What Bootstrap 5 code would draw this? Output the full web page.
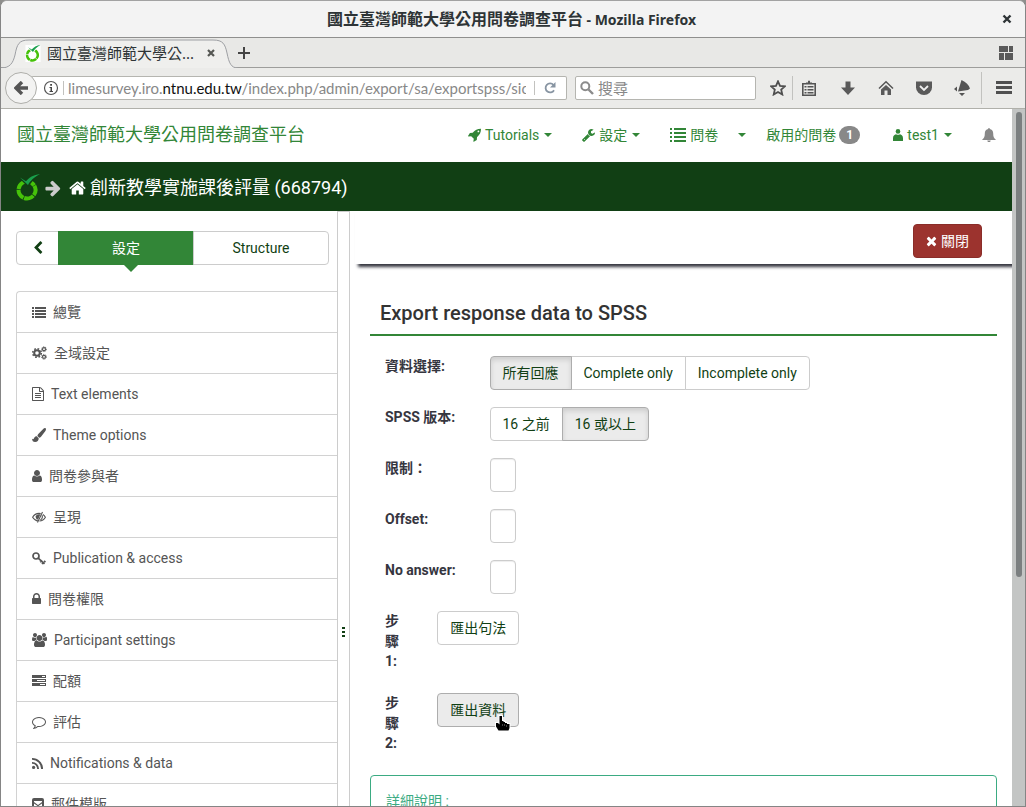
<!DOCTYPE html>
<html lang="zh-Hant-TW">
<head>
<meta charset="utf-8">
<meta name="viewport" content="width=device-width, initial-scale=1">
<title>國立臺灣師範大學公用問卷調查平台 - Mozilla Firefox</title>
<link href="https://cdn.jsdelivr.net/npm/bootstrap@5.3.0/dist/css/bootstrap.min.css" rel="stylesheet">
<style>
  :root { --ls-green: #328637; --ls-dark: #113f14; --ls-line: #ccc; --ls-text: #555; --chrome-line: #b0b0aa; }
  body { font-family: Roboto, "Noto Sans CJK TC", sans-serif; font-size: 14px; line-height: 20px; color: #333; background: #8e8e8c; }
  svg { display: block; flex: none; fill: currentColor; }
  a { text-decoration: none; color: inherit; }

  /* browser window */
  .win { border: 1px solid #858585; border-top-color: #a2a2a2; border-radius: 7px 7px 0 0; background: #ebebe9; }
  .win-chrome { font-family: "Noto Sans", "Noto Sans CJK TC", sans-serif; color: #2e3436; }
  .titlebar { height: 37px; background: #f3f3f3; border-bottom: 1px solid #8f8f8e; font-size: 14px; font-weight: 700; padding: 0 13px 0 20px; }
  .titlebar .zh { font-size: 16px; }
  .icon-btn { border: 0; background: none; padding: 0; color: #555753; display: flex; align-items: center; justify-content: center; }
  .tabstrip { height: 30px; background: #e8e8e6; box-shadow: inset 0 -1px #9d9d9b; }
  .tab-active { width: 237px; height: 30px; padding: 0 23px 0 24px; font-size: 15px; gap: 6px; }
  .tab-shape { inset: 0; z-index: 0; }
  .toolbar { height: 41px; border-bottom: 1px solid var(--chrome-line); padding: 0 0 0 4px; }
  .back { width: 32px; height: 32px; border: 1px solid #aeaeaa; border-radius: 50%; background: #f3f3f2; z-index: 2; }
  .fieldbox { height: 24px; background: #fff; border: 1px solid #b5b5b0; border-radius: 2px; }
  .urlbox { flex: 1 1 0; min-width: 0; margin-left: -6px; padding: 0 9px 0 12px; border-left: 0; }
  .url-text { font-family: Lato, "Noto Sans", sans-serif; font-size: 15px; color: #888; overflow: hidden; white-space: nowrap; line-height: 22px; }
  .url-text b { font-weight: 400; color: #111; }
  .searchbox { flex: 0 0 181px; padding: 0 6px 0 4px; }
  .searchbox input { border: 0; outline: 0; background: none; padding: 0; min-width: 0; font-size: 15px; }
  .searchbox input::placeholder { color: #888; opacity: 1; }
  .vline { width: 1px; flex: none; background: #c2c2bf; }
  .tool { flex: 0 0 38px; height: 24px; }
  .tool-star { flex-basis: 28px; }
  .tool-list { flex-basis: 32px; }
  .tool-menu { flex-basis: 43px; }

  /* page */
  .gutter { width: 13px; background: #c3c5c4; padding: 3px 3px 0 4px; }
  .thumb { height: 67%; width: 6px; border-radius: 3px; background: #7b7f80; }
  .topnav { height: 53px; background: #fff; color: var(--ls-green); padding: 0 16px 2px; }
  .brand { font-size: 18px; }
  .topnav .mitem { padding: 0 15px; display: flex; align-items: center; }
  .topnav .mitem.surveys { padding-right: 8px; }
  .topnav .mitem.surveys-menu { padding: 0 12px 0 7px; }
  .topnav .mitem.running { padding: 0 18px 0 8px; }
  .caret4::after { content: ""; margin-left: 5px; border: 4px solid transparent; border-top-color: currentColor; border-bottom: 0; }
  .count { background: #888; color: #fff; font-size: 12px; line-height: 18px; min-width: 21px; border-radius: 10px; text-align: center; font-weight: 700; margin-left: 3px; }
  .crumbs { height: 49px; background: var(--ls-dark); color: #fff; font-size: 18px; padding: 2px 15px 0; }
  .side { width: 336px; padding: 20px 0 0 15px; }
  .side-tabs { margin-right: 8px; }
  .btn-ls { --bs-btn-font-size: 14px; --bs-btn-line-height: 20px; --bs-btn-padding-x: 12px; --bs-btn-padding-y: 6px; --bs-btn-border-radius: 4px;
    --bs-btn-color: var(--ls-dark); --bs-btn-bg: #fff; --bs-btn-border-color: var(--ls-line);
    --bs-btn-hover-color: var(--ls-dark); --bs-btn-hover-bg: #ebebeb; --bs-btn-hover-border-color: #adadad;
    --bs-btn-active-color: var(--ls-dark); --bs-btn-active-bg: #ebebeb; --bs-btn-active-border-color: #adadad; }
  .btn-check:checked + .btn-ls { box-shadow: inset 0 3px 5px rgba(0,0,0,.125); }
  .btn-ls.hovered { background: #ebebeb; border-color: #adadad; }
  .btn-ls.current { background: var(--ls-green); border-color: var(--ls-green); color: #fff; }
  .btn-ls.current::after { content: ""; position: absolute; top: 100%; left: 50%; margin-left: -3px; border: 8px solid transparent; border-top-color: var(--ls-green); border-bottom: 0; }
  .side-back { width: 43px; }
  .side-list { margin-top: 26px; --bs-list-group-border-color: #d2d2d2; --bs-list-group-border-radius: 4px; }
  .side-list .list-group-item { height: 41px; padding: 0 15px; gap: 7px; color: var(--ls-text); border-right: 0; border-bottom: 0; border-top-width: 1px; margin: 0; display: flex; align-items: center; border-top-right-radius: 0; }
  .splitter { width: 13px; border: 1px solid #ccc; border-bottom: 0; background: #fff; color: var(--ls-dark); }
  .splitter svg { margin-top: 246px; }
  .actionbar { margin-left: 5px; height: 53px; padding-right: 30px; box-shadow: 3px 3px 3px #35363f; border-top: 6px solid #fff; position: relative; }
  .btn-close-ls { --bs-btn-bg: #9c332e; --bs-btn-border-color: #8a2d29; --bs-btn-color: #fff; }
  .panel-main { padding: 37px 15px 0 20px; }
  .pagetitle { font-size: 20px; line-height: 24px; font-weight: 500; padding: 0 10px 9px; border-bottom: 2px solid var(--ls-green); margin: 0 0 20px; color: #333; }
  .panel-main .row { --bs-gutter-x: 30px; margin: 0 0 17px; }
  .panel-main .row.step { margin-bottom: 22px; }
  .flabel { font-weight: 700; color: #36363f; }
  .smallfield { width: 26px; height: 34px; border: 1px solid #ccc; border-radius: 4px; padding: 6px 12px; box-shadow: inset 0 1px 1px rgba(0,0,0,.075); }
  .notice { border: 1px solid #3bab82; border-radius: 4px 4px 0 0; padding: 15px; color: #3bab82; height: 90px; }
  .pointer { left: 58px; top: 22px; z-index: 3; }
</style>
</head>
<body>
<svg class="d-none" aria-hidden="true">
  <symbol id="i-home" viewBox="64 0 1664 1792"><path d="M1472 992v480q0 26-19 45t-45 19h-384v-384h-256v384h-384q-26 0-45-19t-19-45v-480q0-1 .5-3t.5-3l575-474 575 474q1 2 1 6zm223-69l-62 74q-8 9-21 11h-3q-13 0-21-7l-692-577-692 577q-12 8-24 7-13-2-21-11l-62-74q-8-10-7-23.500t11-21.500l719-599q32-26 76-26t76 26l244 204v-195q0-14 9-23t23-9h192q14 0 23 9t9 23v408l219 182q10 8 11 21.500t-7 23.500z"/></symbol>
  <symbol id="i-user" viewBox="256 0 1280 1792"><path d="M1536 1399q0 109-62.500 187t-150.500 78h-854q-88 0-150.500-78t-62.500-187q0-85 8.500-160.500t31.500-152 58.500-131 94-89 134.500-34.500q131 128 313 128t313-128q76 0 134.500 34.500t94 89 58.500 131 31.500 152 8.500 160.500zm-256-887q0 159-112.500 271.500t-271.500 112.500-271.500-112.500-112.500-271.500 112.500-271.500 271.500-112.500 271.500 112.500 112.500 271.500z"/></symbol>
  <symbol id="i-lock" viewBox="320 0 1152 1792"><path d="M640 768h512v-192q0-106-75-181t-181-75-181 75-75 181v192zm832 96v576q0 40-28 68t-68 28h-960q-40 0-68-28t-28-68v-576q0-40 28-68t68-28h32v-192q0-184 132-316t316-132 316 132 132 316v192h32q40 0 68 28t28 68z"/></symbol>
  <symbol id="i-file" viewBox="128 0 1536 1792"><path d="M1596 380q28 28 48 76t20 88v1152q0 40-28 68t-68 28h-1344q-40 0-68-28t-28-68v-1600q0-40 28-68t68-28h896q40 0 88 20t76 48zm-444-244v376h376q-10-29-22-41l-313-313q-12-12-41-22zm384 1528v-1024h-416q-40 0-68-28t-28-68v-416h-768v1536h1280zm-1024-864q0-14 9-23t23-9h704q14 0 23 9t9 23v64q0 14-9 23t-23 9h-704q-14 0-23-9t-9-23v-64zm736 224q14 0 23 9t9 23v64q0 14-9 23t-23 9h-704q-14 0-23-9t-9-23v-64q0-14 9-23t23-9h704zm0 256q14 0 23 9t9 23v64q0 14-9 23t-23 9h-704q-14 0-23-9t-9-23v-64q0-14 9-23t23-9h704z"/></symbol>
  <symbol id="i-comment" viewBox="0 0 1792 1792"><path d="M896 384q-204 0-381.500 69.500t-282 187.500-104.500 255q0 112 71.500 213.500t201.500 175.500l87 50-27 96q-24 91-70 172 152-63 275-171l43-38 57 6q69 8 130 8 204 0 381.500-69.500t282-187.500 104.500-255-104.500-255-282-187.500-381.500-69.500zm896 512q0 174-120 321.500t-326 233-450 85.500q-70 0-145-8-198 175-460 242-49 14-114 22h-5q-15 0-27-10.500t-16-27.500v-1q-3-4-.5-12t2-10 4.500-9.500l6-9 7-8.500 8-9q7-8 31-34.500t34.500-38 31-39.500 32.500-51 27-59 26-76q-157-89-247.500-220t-90.500-281q0-174 120-321.500t326-233 450-85.500 450 85.500 326 233 120 321.500z"/></symbol>
  <symbol id="i-wrench" viewBox="64 0 1664 1792"><path d="M448 1472q0-26-19-45t-45-19-45 19-19 45 19 45 45 19 45-19 19-45zm644-420l-682 682q-37 37-90 37-52 0-91-37l-106-108q-38-36-38-90 0-53 38-91l681-681q39 98 114.500 173.500t173.500 114.500zm634-435q0 39-23 106-47 134-164.500 217.500t-258.500 83.500q-185 0-316.500-131.500t-131.500-316.500 131.500-316.500 316.500-131.500q58 0 121.500 16.500t107.500 46.500q16 11 16 28t-16 28l-293 169v224l193 107q5-3 79-48.500t135.500-81 70.500-35.500q15 0 23.500 10t8.500 25z"/></symbol>
  <symbol id="i-arrow" viewBox="0 0 1664 1792"><path d="M1600 960q0 54-37 91l-651 651q-39 37-91 37-51 0-90-37l-75-75q-38-38-38-91t38-91l293-293h-704q-52 0-84.500-37.500t-32.500-90.500v-128q0-53 32.500-90.500t84.500-37.500h704l-293-294q-38-36-38-90t38-90l75-75q38-38 90-38 53 0 91 38l651 651q37 35 37 90z"/></symbol>
  <symbol id="i-chevron" viewBox="256 0 1280 1792"><path d="M1427 301l-531 531 531 531q19 19 19 45t-19 45l-166 166q-19 19-45 19t-45-19l-742-742q-19-19-19-45t19-45l742-742q19-19 45-19t45 19l166 166q19 19 19 45t-19 45z"/></symbol>
  <symbol id="i-times" viewBox="192 0 1408 1792"><path d="M1490 1322q0 40-28 68l-136 136q-28 28-68 28t-68-28l-294-294-294 294q-28 28-68 28t-68-28l-136-136q-28-28-28-68t28-68l294-294-294-294q-28-28-28-68t28-68l136-136q28-28 68-28t68 28l294 294 294-294q28-28 68-28t68 28l136 136q28 28 28 68t-28 68l-294 294 294 294q28 28 28 68z"/></symbol>
  <symbol id="i-users" viewBox="-64 0 1920 1792"><path d="M529 896q-162 5-265 128h-134q-82 0-138-40.500t-56-118.500q0-353 124-353 6 0 43.500 21t97.500 42.500 119 21.500q67 0 133-23-5 37-5 66 0 159 93 290zm1071 637q0 120-73 189.500t-194 69.500h-874q-121 0-194-69.500t-73-189.500q0-53 3.500-103.500t14-109 26.500-108.500 43-97.500 62-81 85.500-53.500 111.500-20q10 0 43 21.500t73 48 107 48 135 21.500 135-21.500 107-48 73-48 43-21.500q61 0 111.500 20t85.500 53.500 62 81 43 97.500 26.500 108.500 14 109 3.500 103.500zm-1024-1277q0 106-75 181t-181 75-181-75-75-181 75-181 181-75 181 75 75 181zm704 384q0 159-112.500 271.500t-271.500 112.500-271.500-112.500-112.500-271.500 112.500-271.500 271.500-112.500 271.500 112.500 112.500 271.500zm576 225q0 78-56 118.500t-138 40.500h-134q-103-123-265-128 93-131 93-290 0-29-5-66 66 23 133 23 59 0 119-21.500t97.500-42.500 43.500-21q124 0 124 353zm-128-609q0 106-75 181t-181 75-181-75-75-181 75-181 181-75 181 75 75 181z"/></symbol>
  <symbol id="i-list" viewBox="0 0 14 14"><path d="M0 2h2v2H0zM3 2h11v2H3zM0 5h2v2H0zM3 5h11v2H3zM0 8h2v2H0zM3 8h11v2H3zM0 11h2v2H0zM3 11h11v2H3z"/></symbol>
  <symbol id="i-biglist" viewBox="0 0 16 14"><path d="M0 0h2v2H0zM4 0h12v2H4zM0 4h2v2H0zM4 4h12v2H4zM0 8h2v2H0zM4 8h12v2H4zM0 12h2v2H0zM4 12h12v2H4z"/></symbol>
  <symbol id="i-cogs" viewBox="0 0 15 14"><g fill="none" stroke="currentColor"><circle cx="5" cy="7" r="2.800" stroke-width="2"/><circle cx="5" cy="7" r="4.300" stroke-width="1.600" stroke-dasharray="1.700 1.677"/><circle cx="12" cy="3.200" r="1.500" stroke-width="1.200"/><circle cx="12" cy="3.200" r="2.400" stroke-width="1" stroke-dasharray="1 .885"/><circle cx="12" cy="10.800" r="1.500" stroke-width="1.200"/><circle cx="12" cy="10.800" r="2.400" stroke-width="1" stroke-dasharray="1 .885"/></g></symbol>
  <symbol id="i-brush" viewBox="0 0 14 14"><path d="M12.800 0C13.500 0 14 .5 14 1.200c0 .6-.3 1.200-.8 2L9 8.700C8.400 9.400 7.800 9.600 7.200 9.800L5.400 7.900C5.500 7.300 5.700 6.700 6.300 6.100L11.700.6C12 .2 12.400 0 12.800 0zM4.700 8.200 6.700 10.200C6.800 12.500 5.300 14 3.100 14 1.200 14 .1 12.700 0 10.700L1 11.200C1.600 11.300 1.900 10.400 2.200 9.800 2.700 8.800 3.500 8.200 4.700 8.200z"/></symbol>
  <symbol id="i-lowvision" viewBox="0 0 14 14"><g fill="none" stroke="currentColor" stroke-width="1.100"><path d="M6.200 11C3.700 10.700 1.900 9.300.6 7.200 2 4.900 4.200 3.400 7 3.400c.6 0 1.200.1 1.700.2M10.900 4.500c1 .7 1.800 1.600 2.500 2.700-1.300 2.200-3.400 3.600-6 3.800M10.500 1.900 5.500 12.600"/><path d="M10 5.300C10.800 7.200 10 9 8.400 10"/></g><path d="M8.300 4.600 6 9.700C4.300 9.300 3.500 8 3.800 6.300 4.300 4.600 6.500 3.500 8.300 4.600z"/></symbol>
  <symbol id="i-key" viewBox="0 0 14 14"><g fill="none" stroke="currentColor" stroke-width="1.700"><circle cx="4" cy="5" r="3"/><path d="M6.200 7.200 12.500 12.800M10 13l1.600-1.800M8.200 11.200 10 9.200M12 10l1.500 1.200"/></g></symbol>
  <symbol id="i-server" viewBox="0 0 14 14"><path fill-rule="evenodd" d="M0 1h14v3H0zM10 2v1h3V2zM0 5h14v3H0zM5 6v1h8V6zM0 9h14v3H0zM8 10v1h5v-1z"/></symbol>
  <symbol id="i-rss" viewBox="0 0 11 14"><circle cx="1.600" cy="11.400" r="1.600"/><path fill="none" stroke="currentColor" stroke-width="1.900" d="M0 6.900A6 6 0 0 1 6.100 13M0 2.900A10 10 0 0 1 10.100 13"/></symbol>
  <symbol id="i-mail" viewBox="0 0 12 14"><path fill-rule="evenodd" d="M2 1h8a2 2 0 0 1 2 2v8a2 2 0 0 1-2 2H2a2 2 0 0 1-2-2V3a2 2 0 0 1 2-2zM2 4v1l4 3 4-3V4zM2 6.500V10h8V6.500L6 9.300z"/></symbol>
  <symbol id="i-rocket" viewBox="0 0 13 14"><path d="M13 .8C13 4.500 11.800 6.800 9 9.200L8.800 12 5.800 13.800 5.300 13.500 5.800 10.800 3.200 8.200.4 8.600 0 8.100 1.900 5.100 4.700 4.800C7 2 9.300.8 13 .8z"/><circle cx="10.400" cy="3.400" r=".9" fill="#fff"/></symbol>
  <symbol id="i-person" viewBox="0 0 10 12"><circle cx="5" cy="2.400" r="2.300"/><path d="M0 12V9.200C0 6.700 1.500 5.600 3 5.300 4.300 6 5.700 6 7 5.300 8.500 5.600 10 6.700 10 9.200V12z"/></symbol>
  <symbol id="i-bell" viewBox="0 0 14 14"><path d="M7.700 1.100C10 1.500 11.200 3.200 11.200 5.400c0 3.300.8 4.700 2.500 6.100v.6H.3v-.6C2 10.100 2.800 8.700 2.800 5.400 2.800 3.200 4 1.500 6.300 1.100 6.100.4 6.400 0 7 0s.9.4.7 1.100zM5.300 12.500h3.400C8.600 13.500 8 14 7 14s-1.600-.5-1.700-1.500z"/></symbol>
  <symbol id="i-logo" viewBox="0 0 24 27"><g fill="none" stroke="#46c20a" stroke-width="4"><circle cx="11" cy="16" r="8.500" stroke-dasharray="9.900 .78" transform="rotate(-30 11 16)"/></g><path fill="var(--logo-bg)" d="M3 4h16l-7 9z"/><path fill="#19a04c" d="M4 3.500 10 7.300C13 3.500 17.500.8 24 0 18 3.200 14.500 6.500 12 11z"/></symbol>
</svg>

<div class="win vh-100 d-flex flex-column overflow-hidden">
  <header class="win-chrome">
    <div class="titlebar d-flex align-items-center">
      <div class="flex-grow-1 text-center"><span class="zh">國立臺灣師範大學公用問卷調查平台</span> - Mozilla Firefox</div>
      <button class="icon-btn" aria-label="關閉視窗"><svg width="10" height="10" viewBox="0 0 10 10"><path d="M1.500 1.500l7 7m0-7l-7 7" stroke="#2e3436" stroke-width="2.400"/></svg></button>
    </div>
    <div class="tabstrip d-flex align-items-center pe-2">
      <div class="tab-active position-relative d-flex align-items-center">
        <svg class="tab-shape position-absolute w-100 h-100" viewBox="0 0 237 30" preserveAspectRatio="none"><path d="M0 30C9 30 12 25 14 17 16 6 18 2 28 2H212C222 2 224 6 226 15 228 25 230 30 237 30" fill="#efefed" stroke="#9d9fa3"/></svg>
        <svg class="position-relative" style="--logo-bg:#fff" width="16" height="17" viewBox="0 0 24 27"><path fill="#fff" d="M0 0h24v27H0z"/><use href="#i-logo" width="24" height="27"/></svg>
        <span class="position-relative flex-grow-1">國立臺灣師範大學公...</span>
        <button class="icon-btn position-relative" aria-label="關閉分頁"><svg width="8" height="8" viewBox="0 0 8 8"><path d="M1 1l6 6m0-6l-6 6" stroke="currentColor" stroke-width="2.200"/></svg></button>
      </div>
      <button class="icon-btn" aria-label="開新分頁"><svg width="12" height="12" viewBox="0 0 12 12"><path d="M6 0v12M0 6h12" stroke="#444" stroke-width="2"/></svg></button>
      <button class="icon-btn ms-auto me-1" aria-label="分頁群組"><svg width="14" height="14" viewBox="0 0 14 14"><path d="M0 0h9v6H0zM10 0h4v6h-4zM0 7h5v7H0zM6 7h8v7H6z" fill="#5a5a5a"/></svg></button>
    </div>
    <div class="toolbar d-flex align-items-center">
      <button class="icon-btn back flex-shrink-0" aria-label="上一頁"><svg width="14" height="14" viewBox="0 0 14 14"><path d="M8 1 2 7l6 6M2.500 7H14" fill="none" stroke="#555" stroke-width="3.400"/></svg></button>
      <div class="fieldbox urlbox d-flex align-items-center">
        <svg width="16" height="16" viewBox="0 0 16 16"><circle cx="8" cy="8" r="6.500" fill="none" stroke="#555" stroke-width="1.200"/><path d="M7.200 4h1.800v1.800H7.200zM6.500 7h2.500v4H10v1H6.500v-1h1V8h-1z" fill="#444"/></svg>
        <span class="vline align-self-stretch my-1 mx-1"></span>
        <a class="url-text flex-grow-1" href="#">limesurvey.iro.<b>ntnu.edu.tw</b>/index.php/admin/export/sa/exportspss/sic</a>
        <span class="vline align-self-stretch my-1 ms-2"></span>
        <button class="icon-btn ps-2" aria-label="重新載入"><svg width="14" height="14" viewBox="0 0 14 14"><path d="M11 9.200A4.500 4.500 0 1 1 10.500 4" fill="none" stroke="#8794a2" stroke-width="1.800"/><path d="M12.500 1v5.500H7z" fill="#8794a2"/></svg></button>
      </div>
      <label class="fieldbox searchbox d-flex align-items-center ms-2">
        <svg width="14" height="14" viewBox="0 0 14 14"><circle cx="5.300" cy="5.300" r="4" fill="none" stroke="#8b8b8b" stroke-width="2"/><path d="M8.500 8.500l4.500 4.500" stroke="#8b8b8b" stroke-width="2.400"/></svg>
        <input class="ms-1 w-100" type="text" placeholder="搜尋" aria-label="搜尋">
      </label>
      <button class="icon-btn tool tool-star ms-2" aria-label="書籤"><svg width="16" height="16" viewBox="0 0 16 16"><path d="M8 1.300l2 4.500 4.900.5-3.700 3.300 1.100 4.900L8 12l-4.300 2.500 1.100-4.900L1.100 6.300 6 5.800z" fill="none" stroke="#4f4f4f" stroke-width="1.800"/></svg></button>
      <span class="vline align-self-stretch my-2"></span>
      <button class="icon-btn tool tool-list me-1" aria-label="書籤清單"><svg width="16" height="16" viewBox="0 0 16 16"><path d="M1.800 3.800h12.400v11.400H1.800z" fill="none" stroke="#555" stroke-width="1.600"/><path d="M5 4V2.500h2V.8h2v1.700h2V4zM3.500 6h2v1.400h-2zM6.500 6h6v1.400h-6zM3.500 9h2v1.400h-2zM6.500 9h6v1.400h-6zM3.500 12h2v1.400h-2zM6.500 12h6v1.400h-6z" fill="#555"/></svg></button>
      <button class="icon-btn tool" aria-label="下載"><svg width="16" height="16" viewBox="0 0 16 16"><path d="M5.500 1.500h5v6H15l-7 7.500-7-7.500h4.500z" fill="#5a5a5a"/></svg></button>
      <button class="icon-btn tool" aria-label="首頁"><svg width="16" height="16" viewBox="0 0 16 16"><path d="M1 8.500 8 1.800l7 6.700" fill="none" stroke="#555" stroke-width="1.500"/><path d="M8 5l5 4.600V15H9.500v-4.500h-3V15H3V9.600z" fill="#5a5a5a"/></svg></button>
      <button class="icon-btn tool" aria-label="Pocket"><svg width="16" height="16" viewBox="0 0 16 16"><path d="M0 1.500h16v6a8 7.500 0 0 1-16 0z" fill="#5a5a5a"/><path d="M4 6l4 4 4-4" fill="none" stroke="#f0f0f0" stroke-width="1.800"/></svg></button>
      <button class="icon-btn tool" aria-label="附加元件"><svg width="16" height="16" viewBox="0 0 16 16"><path d="M7.500 0 C12 2 15 5 16 8.500L14 10 4 11.500zM3 6.500v5L0 9zM5 13h6l-3 3z" fill="#555"/></svg></button>
      <span class="vline align-self-stretch my-1"></span>
      <button class="icon-btn tool tool-menu" aria-label="選單"><svg width="16" height="14" viewBox="0 0 16 14"><path d="M0 0h16v3H0zM0 5h16v3H0zM0 10h16v3H0z" fill="#505050"/></svg></button>
    </div>
  </header>

  <div class="d-flex flex-grow-1 overflow-hidden">
    <div class="d-flex flex-column flex-grow-1 bg-white overflow-hidden">
      <nav class="topnav d-flex align-items-center flex-shrink-0">
        <a class="brand me-auto text-nowrap" href="#">國立臺灣師範大學公用問卷調查平台</a>
        <a class="mitem caret4" href="#"><svg class="me-1" width="13" height="14"><use href="#i-rocket"/></svg>Tutorials</a>
        <a class="mitem caret4" href="#"><svg class="me-1" width="13" height="14"><use href="#i-wrench"/></svg>設定</a>
        <a class="mitem surveys" href="#"><svg class="me-1" width="16" height="14"><use href="#i-biglist"/></svg>問卷</a>
        <a class="mitem caret4 surveys-menu" href="#" aria-label="問卷選單"></a>
        <a class="mitem running" href="#">啟用的問卷<span class="count">1</span></a>
        <a class="mitem caret4" href="#"><svg class="me-1" width="10" height="12"><use href="#i-person"/></svg>test1</a>
        <a class="mitem pe-0" href="#" aria-label="通知"><svg width="14" height="14" color="#888"><use href="#i-bell"/></svg></a>
      </nav>
      <div class="crumbs d-flex align-items-center flex-shrink-0">
        <svg style="--logo-bg:#113f14" width="24" height="27"><use href="#i-logo"/></svg>
        <svg class="ms-1" width="17" height="18" color="#ccc"><use href="#i-arrow"/></svg>
        <a class="d-flex align-items-center ms-2" href="#"><svg class="me-1" width="17" height="18"><use href="#i-home"/></svg>創新教學實施課後評量 (668794)</a>
      </div>
      <div class="d-flex flex-grow-1 overflow-hidden">
        <aside class="side flex-shrink-0 overflow-hidden">
          <div class="side-tabs btn-group d-flex">
            <button class="btn btn-ls side-back flex-grow-0 flex-shrink-0 d-flex align-items-center justify-content-center" aria-label="收合"><svg width="10" height="14"><use href="#i-chevron"/></svg></button>
            <button class="btn btn-ls current w-50">設定</button>
            <button class="btn btn-ls w-50">Structure</button>
          </div>
          <div class="side-list list-group">
            <a class="list-group-item" href="#"><svg width="14" height="14"><use href="#i-list"/></svg>總覽</a>
            <a class="list-group-item" href="#"><svg width="15" height="14"><use href="#i-cogs"/></svg>全域設定</a>
            <a class="list-group-item" href="#"><svg width="12" height="14"><use href="#i-file"/></svg>Text elements</a>
            <a class="list-group-item" href="#"><svg width="14" height="14"><use href="#i-brush"/></svg>Theme options</a>
            <a class="list-group-item" href="#"><svg width="10" height="14"><use href="#i-user"/></svg>問卷參與者</a>
            <a class="list-group-item" href="#"><svg width="14" height="14"><use href="#i-lowvision"/></svg>呈現</a>
            <a class="list-group-item" href="#"><svg width="14" height="14"><use href="#i-key"/></svg>Publication &amp; access</a>
            <a class="list-group-item" href="#"><svg width="9" height="14"><use href="#i-lock"/></svg>問卷權限</a>
            <a class="list-group-item" href="#"><svg width="15" height="14"><use href="#i-users"/></svg>Participant settings</a>
            <a class="list-group-item" href="#"><svg width="14" height="14"><use href="#i-server"/></svg>配額</a>
            <a class="list-group-item" href="#"><svg width="14" height="14"><use href="#i-comment"/></svg>評估</a>
            <a class="list-group-item" href="#"><svg width="11" height="14"><use href="#i-rss"/></svg>Notifications &amp; data</a>
            <a class="list-group-item" href="#"><svg width="12" height="14"><use href="#i-mail"/></svg>郵件模版</a>
          </div>
        </aside>
        <button class="splitter icon-btn flex-shrink-0" aria-label="調整寬度"><svg width="3" height="10" viewBox="0 0 3 10"><path d="M0 0h3v2H0zM0 4h3v2H0zM0 8h3v2H0z"/></svg></button>
        <main class="flex-grow-1 overflow-hidden">
          <div class="actionbar d-flex align-items-center justify-content-end">
            <button class="btn btn-ls btn-close-ls d-flex align-items-center"><svg class="me-1" width="11" height="14"><use href="#i-times"/></svg>關閉</button>
          </div>
          <form class="panel-main">
            <h3 class="pagetitle">Export response data to SPSS</h3>
            <div class="row">
              <span class="col-2 flabel text-nowrap">資料選擇:</span>
              <div class="col-10"><div class="btn-group" role="group" aria-label="資料選擇">
                <input class="btn-check" type="radio" name="sel" id="s1" checked><label class="btn btn-ls" for="s1">所有回應</label>
                <input class="btn-check" type="radio" name="sel" id="s2"><label class="btn btn-ls" for="s2">Complete only</label>
                <input class="btn-check" type="radio" name="sel" id="s3"><label class="btn btn-ls" for="s3">Incomplete only</label>
              </div></div>
            </div>
            <div class="row">
              <span class="col-2 flabel text-nowrap">SPSS 版本:</span>
              <div class="col-10"><div class="btn-group" role="group" aria-label="SPSS 版本">
                <input class="btn-check" type="radio" name="ver" id="v1"><label class="btn btn-ls" for="v1">16 之前</label>
                <input class="btn-check" type="radio" name="ver" id="v2" checked><label class="btn btn-ls" for="v2">16 或以上</label>
              </div></div>
            </div>
            <div class="row"><label class="col-2 flabel" for="f1">限制：</label><div class="col-10 d-flex"><input class="smallfield" id="f1" type="text"></div></div>
            <div class="row"><label class="col-2 flabel" for="f2">Offset:</label><div class="col-10 d-flex"><input class="smallfield" id="f2" type="text"></div></div>
            <div class="row"><label class="col-2 flabel text-nowrap" for="f3">No answer:</label><div class="col-10 d-flex"><input class="smallfield" id="f3" type="text"></div></div>
            <div class="row step"><label class="col-1 flabel" for="b1">步驟 1:</label><div class="col-11"><button class="btn btn-ls" type="button" id="b1">匯出句法</button></div></div>
            <div class="row step"><label class="col-1 flabel" for="b2">步驟 2:</label><div class="col-11">
              <div class="position-relative d-inline-block"><button class="btn btn-ls hovered" type="button" id="b2">匯出資料</button>
                <svg class="pointer position-absolute" width="16" height="17" viewBox="0 0 16 17"><path d="M4.500 1h2.500v5h1.500v1H10v1h2v1h2.500v4l-1 2.500h-10L1 11.500V8h2l1.500 1.500z" fill="#000" stroke="#fff" stroke-width="2" paint-order="stroke"/><path d="M7.500 9v2M9.500 9v2M11.500 10v2" stroke="#888" stroke-width=".5"/></svg></div>
            </div></div>
            <div class="notice">詳細說明 :</div>
          </form>
        </main>
      </div>
    </div>
    <div class="gutter flex-shrink-0"><div class="thumb"></div></div>
  </div>
</div>
<script src="https://cdn.jsdelivr.net/npm/bootstrap@5.3.0/dist/js/bootstrap.bundle.min.js"></script>
</body>
</html>
